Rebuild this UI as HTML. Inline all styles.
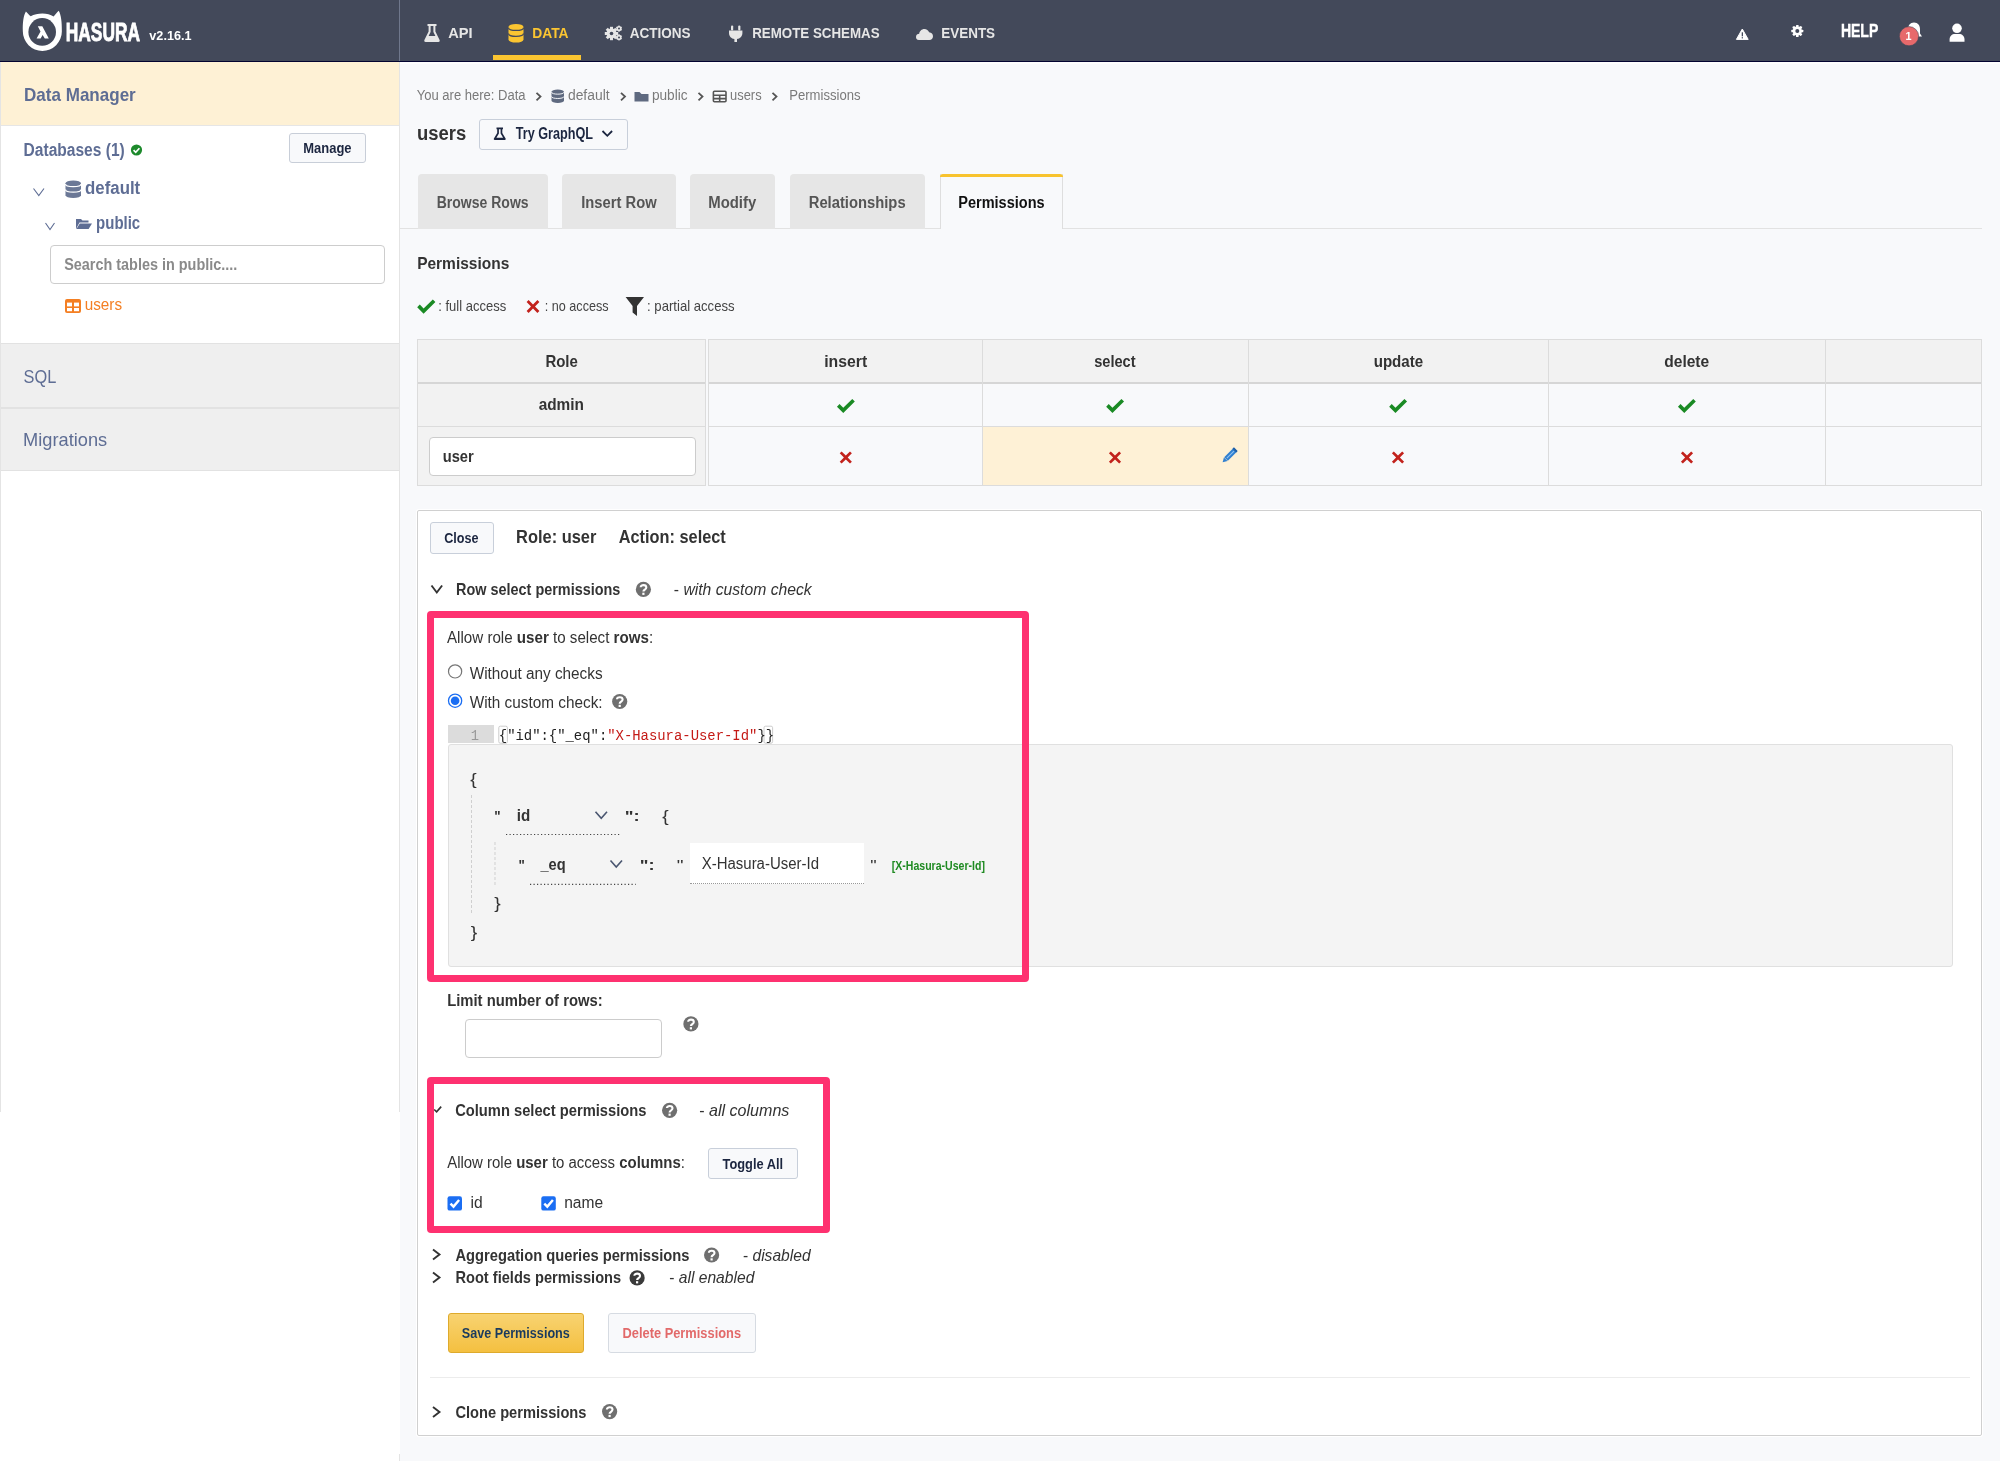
<!DOCTYPE html><html><head><meta charset="utf-8"><title>Hasura Console</title>
<style>html,body{margin:0;padding:0;width:2000px;height:1461px;overflow:hidden;font-family:"Liberation Sans",sans-serif}#root{position:relative;width:2000px;height:1461px;overflow:hidden}svg{position:absolute;left:0;top:0;will-change:transform}</style></head><body><div id="root">
<div style="position:absolute;left:0px;top:0px;width:2000px;height:1461px;background:#f8f9fb"></div>
<div style="position:absolute;left:0px;top:0px;width:2000px;height:61px;background:#43495a"></div>
<div style="position:absolute;left:0px;top:60.8px;width:2000px;height:1.2px;background:#030330"></div>
<div style="position:absolute;left:0px;top:62px;width:2000px;height:1.5px;background:#fdfdfd"></div>
<div style="position:absolute;left:0px;top:62px;width:400px;height:1050px;background:#fff"></div>
<div style="position:absolute;left:0px;top:1112px;width:400px;height:349px;background:#fff"></div>
<div style="position:absolute;left:0px;top:62px;width:1px;height:1050px;background:#e4e4e4"></div>
<div style="position:absolute;left:399px;top:62px;width:1px;height:1050px;background:#e4e4e4"></div>
<div style="position:absolute;left:399px;top:1454px;width:1px;height:7px;background:#e4e4e4"></div>
<div style="position:absolute;left:1px;top:62px;width:398px;height:63px;background:#fef1d5"></div>
<div style="position:absolute;left:1px;top:125px;width:398px;height:1px;background:#e6e6e6"></div>
<div style="position:absolute;left:1px;top:343px;width:398px;height:127px;background:#efefef"></div>
<div style="position:absolute;left:1px;top:343px;width:398px;height:1px;background:#e2e2e2"></div>
<div style="position:absolute;left:1px;top:407px;width:398px;height:1.5px;background:#e2e2e2"></div>
<div style="position:absolute;left:1px;top:470px;width:398px;height:1px;background:#e2e2e2"></div>
<div style="position:absolute;left:398.5px;top:0px;width:1.5px;height:61px;background:#6f778c"></div>
<div style="position:absolute;left:493px;top:55px;width:88px;height:5px;background:#fbc531"></div>
<div style="position:absolute;left:289px;top:132.5px;width:76.5px;height:30.5px;background:#f8f9fb;border:1px solid #c8ced8;border-radius:3px;box-sizing:border-box"></div>
<div style="position:absolute;left:50px;top:244.5px;width:334.5px;height:39px;background:#fff;border:1px solid #cdcdcd;border-radius:4px;box-sizing:border-box"></div>
<div style="position:absolute;left:478.5px;top:118.5px;width:149px;height:31.5px;background:#f8f9fb;border:1px solid #c8cfda;border-radius:3px;box-sizing:border-box"></div>
<div style="position:absolute;left:400px;top:228px;width:1582px;height:1px;background:#e2e2e2"></div>
<div style="position:absolute;left:417.5px;top:173.5px;width:130.20000000000005px;height:55px;background:#e6e6e6;border-radius:4px 4px 0 0"></div>
<div style="position:absolute;left:562px;top:173.5px;width:113.5px;height:55px;background:#e6e6e6;border-radius:4px 4px 0 0"></div>
<div style="position:absolute;left:689.8px;top:173.5px;width:85.40000000000009px;height:55px;background:#e6e6e6;border-radius:4px 4px 0 0"></div>
<div style="position:absolute;left:789.6px;top:173.5px;width:135.39999999999998px;height:55px;background:#e6e6e6;border-radius:4px 4px 0 0"></div>
<div style="position:absolute;left:939.7px;top:173.5px;width:123.59999999999991px;height:55px;background:#f8f9fb;border-left:1px solid #dedede;border-right:1px solid #dedede;box-sizing:border-box"></div>
<div style="position:absolute;left:939.7px;top:173.5px;width:123.59999999999991px;height:3.5px;background:#f8c32e;border-radius:3px 3px 0 0"></div>
<div style="position:absolute;left:417px;top:339px;width:289px;height:147px;background:#f2f2f2"></div>
<div style="position:absolute;left:708px;top:339px;width:1274px;height:44px;background:#f2f2f2"></div>
<div style="position:absolute;left:983px;top:427px;width:265px;height:58px;background:#fef1d6"></div>
<div style="position:absolute;left:417px;top:339px;width:289px;height:1px;background:#dcdcdc"></div>
<div style="position:absolute;left:708px;top:339px;width:1274px;height:1px;background:#dcdcdc"></div>
<div style="position:absolute;left:417px;top:426px;width:289px;height:1px;background:#dcdcdc"></div>
<div style="position:absolute;left:708px;top:426px;width:1274px;height:1px;background:#dcdcdc"></div>
<div style="position:absolute;left:417px;top:485px;width:289px;height:1px;background:#dcdcdc"></div>
<div style="position:absolute;left:708px;top:485px;width:1274px;height:1px;background:#dcdcdc"></div>
<div style="position:absolute;left:417px;top:382px;width:289px;height:1.6px;background:#d6d6d6"></div>
<div style="position:absolute;left:708px;top:382px;width:1274px;height:1.6px;background:#d6d6d6"></div>
<div style="position:absolute;left:417px;top:339px;width:1px;height:147px;background:#dcdcdc"></div>
<div style="position:absolute;left:705px;top:339px;width:1px;height:147px;background:#dcdcdc"></div>
<div style="position:absolute;left:708px;top:339px;width:1px;height:147px;background:#dcdcdc"></div>
<div style="position:absolute;left:982px;top:339px;width:1px;height:147px;background:#dcdcdc"></div>
<div style="position:absolute;left:1248px;top:339px;width:1px;height:147px;background:#dcdcdc"></div>
<div style="position:absolute;left:1548px;top:339px;width:1px;height:147px;background:#dcdcdc"></div>
<div style="position:absolute;left:1825px;top:339px;width:1px;height:147px;background:#dcdcdc"></div>
<div style="position:absolute;left:1981px;top:339px;width:1px;height:147px;background:#dcdcdc"></div>
<div style="position:absolute;left:428.5px;top:437px;width:267px;height:38.5px;background:#fff;border:1px solid #cccccc;border-radius:4px;box-sizing:border-box"></div>
<div style="position:absolute;left:417px;top:509.5px;width:1565px;height:926px;background:#fff;border:1px solid #d0d0d0;border-radius:2px;box-sizing:border-box;box-shadow:0 0 0 1px #fff"></div>
<div style="position:absolute;left:430px;top:522px;width:63.5px;height:31.5px;background:#f8f9fb;border:1px solid #c8cfda;border-radius:3px;box-sizing:border-box"></div>
<div style="position:absolute;left:427.3px;top:611.3px;width:602.2px;height:371.2px;border:7px solid #fe3170;border-radius:4px;box-sizing:border-box;z-index:5"></div>
<div style="position:absolute;left:447.8px;top:725px;width:46.4px;height:18px;background:#dcdcdc"></div>
<div style="position:absolute;left:447.7px;top:744px;width:1505px;height:222.5px;background:#f4f4f4;border:1px solid #e0e0e0;border-radius:3px;box-sizing:border-box"></div>
<div style="position:absolute;left:690px;top:843px;width:174px;height:41px;background:#fff;border-bottom:1px dotted #999;box-sizing:border-box"></div>
<div style="position:absolute;left:465px;top:1019.3px;width:197px;height:38.3px;background:#fff;border:1px solid #cccccc;border-radius:4px;box-sizing:border-box"></div>
<div style="position:absolute;left:427.3px;top:1077.4px;width:403.2px;height:155.8px;border:7px solid #fe3170;border-radius:4px;box-sizing:border-box;z-index:5"></div>
<div style="position:absolute;left:708.3px;top:1147.5px;width:90px;height:31.8px;background:#f8f9fb;border:1px solid #c8cfda;border-radius:3px;box-sizing:border-box"></div>
<div style="position:absolute;left:447.5px;top:1313.3px;width:136.8px;height:39.3px;background:linear-gradient(#f8d371,#f4c040);border:1px solid #deaa2c;border-radius:3px;box-sizing:border-box"></div>
<div style="position:absolute;left:608px;top:1313.3px;width:147.5px;height:39.3px;background:#f8f9fb;border:1px solid #d6dbe2;border-radius:3px;box-sizing:border-box"></div>
<div style="position:absolute;left:430px;top:1377px;width:1540px;height:1.2px;background:#ececec"></div>
<svg width="2000" height="1461" viewBox="0 0 2000 1461">
<path d="M22.85,31.4 C22.5,23 23.5,15.5 25.9,11.5 C27.6,13 29,15 30.7,16.3 C34,14.3 38,13.4 42.4,13.4 C46.8,13.4 50.5,14.4 53.6,16.4 C55.3,14.8 57,12.5 58.7,10.8 C61,14.5 62,22 61.85,31.4 A19.5,19.5 0 1 1 22.85,31.4 Z" fill="#fff"/>
<circle cx="42.2" cy="31.9" r="13.8" fill="#43495a"/>
<path d="M37.8,26.2 L42.3,26.2 L48.8,38.5 L44.8,38.5 L42.6,35 L40.6,38.5 L36.6,38.5 L40.5,31.4 Z" fill="#fff"/>
<text x="65.69" y="41" font-family='"Liberation Sans", sans-serif' font-size="26.16" font-weight="bold" font-style="normal" fill="#fff" textLength="74.35" lengthAdjust="spacingAndGlyphs" stroke="#fff" stroke-width="0.9">HASURA</text>
<text x="149.32" y="39.5" font-family='"Liberation Sans", sans-serif' font-size="13.50" font-weight="bold" font-style="normal" fill="#fff" textLength="42.22" lengthAdjust="spacingAndGlyphs">v2.16.1</text>
<path d="M427.5,24 L436.5,24 L436.5,26 L435.4,26 L435.4,31.5 L439.6,40 C440,41 439.5,42 438.4,42 L425.6,42 C424.5,42 424,41 424.4,40 L428.6,31.5 L428.6,26 L427.5,26 Z M430.6,26 L430.6,32 L428.6,36 L435.4,36 L433.4,32 L433.4,26 Z" fill="#e6e6e6" fill-rule="evenodd"/>
<text x="448.24" y="38" font-family='"Liberation Sans", sans-serif' font-size="15.26" font-weight="bold" font-style="normal" fill="#e6e6e6" textLength="24.37" lengthAdjust="spacingAndGlyphs">API</text>
<rect x="508.5" y="24" width="15" height="18.5" rx="7.5" ry="2.96" fill="#fbc531"/>
<path d="M508.5,27.625999999999998 C508.5,31.326 523.5,31.326 523.5,27.625999999999998" stroke="#43495a" stroke-width="1.30" fill="none"/>
<path d="M508.5,33.546 C508.5,37.246 523.5,37.246 523.5,33.546" stroke="#43495a" stroke-width="1.30" fill="none"/>
<text x="532.24" y="38" font-family='"Liberation Sans", sans-serif' font-size="15.26" font-weight="bold" font-style="normal" fill="#fbc531" textLength="36.37" lengthAdjust="spacingAndGlyphs">DATA</text>
<g fill="#e6e6e6"><circle cx="611.5" cy="33.5" r="5"/><rect x="610" y="26.8" width="3" height="13.4" transform="rotate(0 611.5 33.5)"/><rect x="610" y="26.8" width="3" height="13.4" transform="rotate(45 611.5 33.5)"/><rect x="610" y="26.8" width="3" height="13.4" transform="rotate(90 611.5 33.5)"/><rect x="610" y="26.8" width="3" height="13.4" transform="rotate(135 611.5 33.5)"/><circle cx="619" cy="28.6" r="2.6"/><rect x="618.2" y="25.6" width="1.6" height="6" transform="rotate(0 619 28.6)"/><rect x="618.2" y="25.6" width="1.6" height="6" transform="rotate(60 619 28.6)"/><rect x="618.2" y="25.6" width="1.6" height="6" transform="rotate(120 619 28.6)"/><circle cx="619" cy="37.4" r="2.6"/><rect x="618.2" y="34.4" width="1.6" height="6" transform="rotate(0 619 37.4)"/><rect x="618.2" y="34.4" width="1.6" height="6" transform="rotate(60 619 37.4)"/><rect x="618.2" y="34.4" width="1.6" height="6" transform="rotate(120 619 37.4)"/></g><circle cx="611.5" cy="33.5" r="1.8" fill="#43495a"/><circle cx="619" cy="28.6" r="1" fill="#43495a"/><circle cx="619" cy="37.4" r="1" fill="#43495a"/>
<text x="629.74" y="38" font-family='"Liberation Sans", sans-serif' font-size="15.26" font-weight="bold" font-style="normal" fill="#e6e6e6" textLength="60.87" lengthAdjust="spacingAndGlyphs">ACTIONS</text>
<g fill="#e6e6e6"><rect x="731" y="25.4" width="2.2" height="5" rx="1"/><rect x="738.2" y="25.4" width="2.2" height="5" rx="1"/><path d="M729,30.4 L742.4,30.4 L742.4,33 C742.4,36.5 740,38.6 737,39 L737,42 L734.4,42 L734.4,39 C731.4,38.6 729,36.5 729,33 Z"/></g>
<text x="752.24" y="38" font-family='"Liberation Sans", sans-serif' font-size="15.26" font-weight="bold" font-style="normal" fill="#e6e6e6" textLength="127.37" lengthAdjust="spacingAndGlyphs">REMOTE SCHEMAS</text>
<path d="M919,40 C916.6,40 916,38.5 916,37 C916,35 917.6,33.8 919.2,33.8 C919.4,31.2 921.6,29 924.4,29 C926.6,29 928.4,30.4 929.1,32.3 C931.6,32.5 933,34.3 933,36.3 C933,38.5 931.5,40 929.4,40 Z" fill="#e6e6e6"/>
<text x="941.24" y="38" font-family='"Liberation Sans", sans-serif' font-size="15.26" font-weight="bold" font-style="normal" fill="#e6e6e6" textLength="53.87" lengthAdjust="spacingAndGlyphs">EVENTS</text>
<path d="M1742.3,29 L1748.2,39.4 L1736.4,39.4 Z" fill="#fff" stroke="#fff" stroke-width="1" stroke-linejoin="round"/><rect x="1741.7" y="32.3" width="1.3" height="4" fill="#43495a"/><rect x="1741.7" y="37.2" width="1.3" height="1.2" fill="#43495a"/>
<g fill="#fff"><circle cx="1797.3" cy="31" r="4.6"/><rect x="1796" y="25" width="2.6" height="12" rx="0.6" transform="rotate(0 1797.3 31)"/><rect x="1796" y="25" width="2.6" height="12" rx="0.6" transform="rotate(45 1797.3 31)"/><rect x="1796" y="25" width="2.6" height="12" rx="0.6" transform="rotate(90 1797.3 31)"/><rect x="1796" y="25" width="2.6" height="12" rx="0.6" transform="rotate(135 1797.3 31)"/></g><circle cx="1797.3" cy="31" r="2" fill="#43495a"/>
<text x="1840.89" y="37" font-family='"Liberation Sans", sans-serif' font-size="18.17" font-weight="bold" font-style="normal" fill="#fff" textLength="37.44" lengthAdjust="spacingAndGlyphs" stroke="#fff" stroke-width="0.4">HELP</text>
<path d="M1914,22.5 C1918,22.5 1920,25.5 1920,29.5 L1920,33.5 L1922,36.5 L1906,36.5 L1908,33.5 L1908,29.5 C1908,25.5 1910,22.5 1914,22.5 Z" fill="#fff"/>
<circle cx="1909" cy="36.2" r="9.6" fill="#e7696b" stroke="#43495a" stroke-width="0.6"/>
<text x="1905.62" y="40" font-family='"Liberation Sans", sans-serif' font-size="11.50" font-weight="bold" font-style="normal" fill="#fff" textLength="6.04" lengthAdjust="spacingAndGlyphs">1</text>
<g fill="#fff"><circle cx="1957" cy="28.3" r="4.8"/><path d="M1949.6,41.7 L1949.6,39.5 C1949.6,36 1952,34 1955,34 L1959,34 C1962,34 1964.5,36 1964.5,39.5 L1964.5,41.7 Z"/></g>
<text x="24.07" y="100.5" font-family='"Liberation Sans", sans-serif' font-size="18.50" font-weight="bold" font-style="normal" fill="#5e6d94" textLength="111.67" lengthAdjust="spacingAndGlyphs">Data Manager</text>
<text x="23.60" y="156" font-family='"Liberation Sans", sans-serif' font-size="18.00" font-weight="bold" font-style="normal" fill="#5e6d94" textLength="101.12" lengthAdjust="spacingAndGlyphs">Databases (1)</text>
<circle cx="136.5" cy="150" r="5.6" fill="#1d8a2c"/><path d="M133.6,150.2 L135.7,152.3 L139.4,148.2" stroke="#fff" stroke-width="1.7" fill="none"/>
<text x="303.25" y="153" font-family='"Liberation Sans", sans-serif' font-size="15.00" font-weight="bold" font-style="normal" fill="#1c2640" textLength="48.35" lengthAdjust="spacingAndGlyphs">Manage</text>
<path d="M33.5,188.5 L38.8,195.5 L44,188.5" stroke="#5e6d94" stroke-width="1.1" fill="none"/>
<rect x="65.5" y="180.5" width="15.5" height="17.5" rx="7.75" ry="2.8000000000000003" fill="#6b7896"/>
<path d="M65.5,183.92999999999998 C65.5,187.42999999999998 81.0,187.42999999999998 81.0,183.92999999999998" stroke="#fff" stroke-width="1.23" fill="none"/>
<path d="M65.5,189.53 C65.5,193.03 81.0,193.03 81.0,189.53" stroke="#fff" stroke-width="1.23" fill="none"/>
<text x="85.12" y="194" font-family='"Liberation Sans", sans-serif' font-size="17.50" font-weight="bold" font-style="normal" fill="#5e6d94" textLength="55.08" lengthAdjust="spacingAndGlyphs">default</text>
<path d="M45.5,223 L50,229.5 L54.5,223" stroke="#5e6d94" stroke-width="1.1" fill="none"/>
<path d="M76,219 L81,219 L82.5,220.5 L88.5,220.5 L88.5,222.5 L79.5,222.5 L76,229 Z M79.8,223.6 L92,223.6 L88.6,229 L76.4,229 Z" fill="#5e6d94"/>
<text x="96.12" y="229" font-family='"Liberation Sans", sans-serif' font-size="17.50" font-weight="bold" font-style="normal" fill="#5e6d94" textLength="44.08" lengthAdjust="spacingAndGlyphs">public</text>
<text x="64.19" y="270" font-family='"Liberation Sans", sans-serif' font-size="16.30" font-weight="bold" font-style="normal" fill="#8a8a8a" textLength="173.07" lengthAdjust="spacingAndGlyphs">Search tables in public....</text>
<g><rect x="65" y="299" width="16" height="14" rx="2" fill="#f47f23"/><rect x="67" y="302.6" width="5" height="3.8" fill="#fff"/><rect x="74" y="302.6" width="5" height="3.8" fill="#fff"/><rect x="67" y="308" width="5" height="3.2" fill="#fff"/><rect x="74" y="308" width="5" height="3.2" fill="#fff"/></g>
<text x="84.74" y="310" font-family='"Liberation Sans", sans-serif' font-size="17.20" font-weight="normal" font-style="normal" fill="#f47f23" textLength="37.35" lengthAdjust="spacingAndGlyphs">users</text>
<text x="23.55" y="383" font-family='"Liberation Sans", sans-serif' font-size="19.00" font-weight="normal" font-style="normal" fill="#5e6d94" textLength="32.71" lengthAdjust="spacingAndGlyphs">SQL</text>
<text x="23.05" y="446" font-family='"Liberation Sans", sans-serif' font-size="19.00" font-weight="normal" font-style="normal" fill="#5e6d94" textLength="84.11" lengthAdjust="spacingAndGlyphs">Migrations</text>
<text x="416.73" y="100.2" font-family='"Liberation Sans", sans-serif' font-size="15.50" font-weight="normal" font-style="normal" fill="#7a7a7a" textLength="108.89" lengthAdjust="spacingAndGlyphs">You are here: Data</text>
<path d="M536.5,92.8 L540.5,96.6 L536.5,100.4" stroke="#555" stroke-width="1.8" fill="none"/>
<rect x="551.5" y="89.5" width="12.5" height="13.5" rx="6.25" ry="2.16" fill="#5f6a80"/>
<path d="M551.5,92.146 C551.5,94.846 564.0,94.846 564.0,92.146" stroke="#f8f9fb" stroke-width="0.95" fill="none"/>
<path d="M551.5,96.466 C551.5,99.166 564.0,99.166 564.0,96.466" stroke="#f8f9fb" stroke-width="0.95" fill="none"/>
<text x="567.93" y="100.2" font-family='"Liberation Sans", sans-serif' font-size="15.50" font-weight="normal" font-style="normal" fill="#7a7a7a" textLength="41.70" lengthAdjust="spacingAndGlyphs">default</text>
<path d="M621,92.8 L625,96.6 L621,100.4" stroke="#555" stroke-width="1.8" fill="none"/>
<path d="M634.5,92 L634.5,101.5 L648.5,101.5 L648.5,94 L641.5,94 L639.5,92 Z" fill="#5f6a80"/>
<text x="651.93" y="100.2" font-family='"Liberation Sans", sans-serif' font-size="15.50" font-weight="normal" font-style="normal" fill="#7a7a7a" textLength="35.70" lengthAdjust="spacingAndGlyphs">public</text>
<path d="M698.5,92.8 L702.5,96.6 L698.5,100.4" stroke="#555" stroke-width="1.8" fill="none"/>
<g fill="none" stroke="#555" stroke-width="1.6"><rect x="713.4" y="91.2" width="12.6" height="10.6" rx="1"/><path d="M713.4,95.2 L726,95.2 M713.4,98.6 L726,98.6 M719.7,95.2 L719.7,101.8"/></g>
<text x="730.05" y="100.2" font-family='"Liberation Sans", sans-serif' font-size="15.00" font-weight="normal" font-style="normal" fill="#7a7a7a" textLength="31.55" lengthAdjust="spacingAndGlyphs">users</text>
<path d="M772.5,92.8 L776.5,96.6 L772.5,100.4" stroke="#555" stroke-width="1.8" fill="none"/>
<text x="789.23" y="100.2" font-family='"Liberation Sans", sans-serif' font-size="15.50" font-weight="normal" font-style="normal" fill="#7a7a7a" textLength="71.39" lengthAdjust="spacingAndGlyphs">Permissions</text>
<text x="417.02" y="140" font-family='"Liberation Sans", sans-serif' font-size="19.50" font-weight="bold" font-style="normal" fill="#333" textLength="49.26" lengthAdjust="spacingAndGlyphs">users</text>
<path d="M496.5,127.6 L503,127.6 L503,129.2 L502.3,129.2 L502.3,133 L505.6,138.6 C506,139.4 505.6,140 504.8,140 L494.7,140 C493.9,140 493.5,139.4 493.9,138.6 L497.2,133 L497.2,129.2 L496.5,129.2 Z M498.9,129.2 L498.9,133.5 L496.4,137.8 L503.1,137.8 L500.6,133.5 L500.6,129.2 Z" fill="#1c2640" fill-rule="evenodd"/>
<text x="515.72" y="139.3" font-family='"Liberation Sans", sans-serif' font-size="15.60" font-weight="bold" font-style="normal" fill="#1c2640" textLength="77.40" lengthAdjust="spacingAndGlyphs">Try GraphQL</text>
<path d="M602.5,131 L607.3,135.8 L612.1,131" stroke="#1c2640" stroke-width="1.8" fill="none"/>
<text x="436.72" y="208" font-family='"Liberation Sans", sans-serif' font-size="15.60" font-weight="bold" font-style="normal" fill="#555" textLength="91.90" lengthAdjust="spacingAndGlyphs">Browse Rows</text>
<text x="581.22" y="208" font-family='"Liberation Sans", sans-serif' font-size="15.60" font-weight="bold" font-style="normal" fill="#555" textLength="75.40" lengthAdjust="spacingAndGlyphs">Insert Row</text>
<text x="708.22" y="208" font-family='"Liberation Sans", sans-serif' font-size="15.60" font-weight="bold" font-style="normal" fill="#555" textLength="48.00" lengthAdjust="spacingAndGlyphs">Modify</text>
<text x="808.72" y="208" font-family='"Liberation Sans", sans-serif' font-size="15.60" font-weight="bold" font-style="normal" fill="#555" textLength="96.90" lengthAdjust="spacingAndGlyphs">Relationships</text>
<text x="958.22" y="208" font-family='"Liberation Sans", sans-serif' font-size="15.60" font-weight="bold" font-style="normal" fill="#111" textLength="86.40" lengthAdjust="spacingAndGlyphs">Permissions</text>
<text x="417.15" y="269.4" font-family='"Liberation Sans", sans-serif' font-size="17.00" font-weight="bold" font-style="normal" fill="#333" textLength="92.13" lengthAdjust="spacingAndGlyphs">Permissions</text>
<path transform="translate(426.2 306.8) scale(1.0)" d="M-9,0.5 L-6.4,-2.2 L-2.6,1.6 L6.6,-7.4 L9.2,-4.7 L-2.6,7 Z" fill="#1a8a24"/>
<text x="438.29" y="310.5" font-family='"Liberation Sans", sans-serif' font-size="14.20" font-weight="normal" font-style="normal" fill="#444" textLength="67.88" lengthAdjust="spacingAndGlyphs">: full access</text>
<path transform="translate(533 306.5) scale(1.0)" d="M-6.4,-4.4 L-4.4,-6.4 L0,-2 L4.4,-6.4 L6.4,-4.4 L2,0 L6.4,4.4 L4.4,6.4 L0,2 L-4.4,6.4 L-6.4,4.4 L-2,0 Z" fill="#c2221c"/>
<text x="544.79" y="310.5" font-family='"Liberation Sans", sans-serif' font-size="14.20" font-weight="normal" font-style="normal" fill="#444" textLength="63.78" lengthAdjust="spacingAndGlyphs">: no access</text>
<path d="M625.6,297 L644,297 L637,306 L637,316 L632.6,312.6 L632.6,306 Z" fill="#333"/>
<text x="647.09" y="310.5" font-family='"Liberation Sans", sans-serif' font-size="14.20" font-weight="normal" font-style="normal" fill="#444" textLength="87.48" lengthAdjust="spacingAndGlyphs">: partial access</text>
<text x="545.38" y="367" font-family='"Liberation Sans", sans-serif' font-size="16.50" font-weight="bold" font-style="normal" fill="#333" textLength="32.48" lengthAdjust="spacingAndGlyphs">Role</text>
<text x="824.22" y="367" font-family='"Liberation Sans", sans-serif' font-size="16.50" font-weight="bold" font-style="normal" fill="#333" textLength="42.98" lengthAdjust="spacingAndGlyphs">insert</text>
<text x="1094.17" y="367" font-family='"Liberation Sans", sans-serif' font-size="16.50" font-weight="bold" font-style="normal" fill="#333" textLength="41.48" lengthAdjust="spacingAndGlyphs">select</text>
<text x="1373.67" y="367" font-family='"Liberation Sans", sans-serif' font-size="16.50" font-weight="bold" font-style="normal" fill="#333" textLength="49.48" lengthAdjust="spacingAndGlyphs">update</text>
<text x="1664.22" y="367" font-family='"Liberation Sans", sans-serif' font-size="16.50" font-weight="bold" font-style="normal" fill="#333" textLength="44.98" lengthAdjust="spacingAndGlyphs">delete</text>
<text x="538.67" y="410" font-family='"Liberation Sans", sans-serif' font-size="16.50" font-weight="bold" font-style="normal" fill="#333" textLength="45.28" lengthAdjust="spacingAndGlyphs">admin</text>
<path transform="translate(845.8 406.2) scale(0.98)" d="M-9,0.5 L-6.4,-2.2 L-2.6,1.6 L6.6,-7.4 L9.2,-4.7 L-2.6,7 Z" fill="#1a8a24"/>
<path transform="translate(1115 406.2) scale(0.98)" d="M-9,0.5 L-6.4,-2.2 L-2.6,1.6 L6.6,-7.4 L9.2,-4.7 L-2.6,7 Z" fill="#1a8a24"/>
<path transform="translate(1398 406.2) scale(0.98)" d="M-9,0.5 L-6.4,-2.2 L-2.6,1.6 L6.6,-7.4 L9.2,-4.7 L-2.6,7 Z" fill="#1a8a24"/>
<path transform="translate(1686.8 406.2) scale(0.98)" d="M-9,0.5 L-6.4,-2.2 L-2.6,1.6 L6.6,-7.4 L9.2,-4.7 L-2.6,7 Z" fill="#1a8a24"/>
<text x="442.68" y="462" font-family='"Liberation Sans", sans-serif' font-size="16.50" font-weight="bold" font-style="normal" fill="#333" textLength="30.98" lengthAdjust="spacingAndGlyphs">user</text>
<path transform="translate(845.8 457.5) scale(0.95)" d="M-6.4,-4.4 L-4.4,-6.4 L0,-2 L4.4,-6.4 L6.4,-4.4 L2,0 L6.4,4.4 L4.4,6.4 L0,2 L-4.4,6.4 L-6.4,4.4 L-2,0 Z" fill="#c2221c"/>
<path transform="translate(1115 457.5) scale(0.95)" d="M-6.4,-4.4 L-4.4,-6.4 L0,-2 L4.4,-6.4 L6.4,-4.4 L2,0 L6.4,4.4 L4.4,6.4 L0,2 L-4.4,6.4 L-6.4,4.4 L-2,0 Z" fill="#c2221c"/>
<path transform="translate(1398 457.5) scale(0.95)" d="M-6.4,-4.4 L-4.4,-6.4 L0,-2 L4.4,-6.4 L6.4,-4.4 L2,0 L6.4,4.4 L4.4,6.4 L0,2 L-4.4,6.4 L-6.4,4.4 L-2,0 Z" fill="#c2221c"/>
<path transform="translate(1687 457.5) scale(0.95)" d="M-6.4,-4.4 L-4.4,-6.4 L0,-2 L4.4,-6.4 L6.4,-4.4 L2,0 L6.4,4.4 L4.4,6.4 L0,2 L-4.4,6.4 L-6.4,4.4 L-2,0 Z" fill="#c2221c"/>
<g transform="translate(1229 456) rotate(45)"><rect x="-2.6" y="-9.2" width="5.2" height="13.4" fill="#2f7fd0"/><path d="M-2.6,4.6 L2.6,4.6 L0,9 Z" fill="#2f7fd0"/><rect x="-2.6" y="-9.6" width="5.2" height="2" fill="#1f5fa8"/><rect x="-0.6" y="-7" width="1.2" height="10" fill="#8cc0f0"/></g>
<text x="444.25" y="543.2" font-family='"Liberation Sans", sans-serif' font-size="15.00" font-weight="bold" font-style="normal" fill="#1c2640" textLength="34.35" lengthAdjust="spacingAndGlyphs">Close</text>
<text x="516.05" y="543.2" font-family='"Liberation Sans", sans-serif' font-size="19.00" font-weight="bold" font-style="normal" fill="#333" textLength="80.31" lengthAdjust="spacingAndGlyphs">Role: user</text>
<text x="618.75" y="543.2" font-family='"Liberation Sans", sans-serif' font-size="19.00" font-weight="bold" font-style="normal" fill="#333" textLength="107.01" lengthAdjust="spacingAndGlyphs">Action: select</text>
<path d="M431.5,585.5 L436.8,592.5 L442.1,585.5" stroke="#333" stroke-width="1.9" fill="none"/>
<text x="456.07" y="594.9" font-family='"Liberation Sans", sans-serif' font-size="16.50" font-weight="bold" font-style="normal" fill="#333" textLength="164.29" lengthAdjust="spacingAndGlyphs">Row select permissions</text>
<circle cx="643.4" cy="589.4" r="7.6" fill="#6f6f6f"/><path d="M640.6999999999999,587.1999999999999 C640.6999999999999,584.4 646.3,584.4 646.3,587.4 C646.3,589.6 643.4,589.6 643.4,591.6" stroke="#fff" stroke-width="2.1" fill="none"/><rect x="642.3" y="592.6999999999999" width="2.2" height="2.2" fill="#fff"/>
<text x="673.77" y="594.9" font-family='"Liberation Sans", sans-serif' font-size="16.50" font-weight="normal" font-style="normal" fill="#333" textLength="137.89" lengthAdjust="spacingAndGlyphs">- <tspan font-style="italic">with custom check</tspan></text>
<text x="447.00" y="643" font-family='"Liberation Sans", sans-serif' font-size="16.00" font-weight="normal" font-style="normal" fill="#333" textLength="206.14" lengthAdjust="spacingAndGlyphs">Allow role <tspan font-weight="bold">user</tspan> to select <tspan font-weight="bold">rows</tspan>:</text>
<circle cx="455.1" cy="671.4" r="6.6" fill="#fff" stroke="#767676" stroke-width="1.2"/>
<text x="469.70" y="678.7" font-family='"Liberation Sans", sans-serif' font-size="16.00" font-weight="normal" font-style="normal" fill="#333" textLength="132.94" lengthAdjust="spacingAndGlyphs">Without any checks</text>
<circle cx="455.1" cy="700.7" r="6.6" fill="#fff" stroke="#1b6ef3" stroke-width="1.3"/><circle cx="455.1" cy="700.7" r="4.3" fill="#1b6ef3"/>
<text x="469.70" y="708" font-family='"Liberation Sans", sans-serif' font-size="16.00" font-weight="normal" font-style="normal" fill="#333" textLength="132.94" lengthAdjust="spacingAndGlyphs">With custom check:</text>
<circle cx="619.7" cy="701.5" r="7.6" fill="#6f6f6f"/><path d="M617.0,699.3 C617.0,696.5 622.6,696.5 622.6,699.5 C622.6,701.7 619.7,701.7 619.7,703.7" stroke="#fff" stroke-width="2.1" fill="none"/><rect x="618.6" y="704.8" width="2.2" height="2.2" fill="#fff"/>
<text x="470.80" y="739.5" font-family='"Liberation Mono", monospace' font-size="14.00" font-weight="normal" font-style="normal" fill="#999" textLength="8.26" lengthAdjust="spacingAndGlyphs">1</text>
<rect x="498.8" y="726.2" width="8.6" height="17" rx="1.5" fill="none" stroke="#c6c6c6" stroke-width="0.9"/><rect x="764" y="726.2" width="8.6" height="17" rx="1.5" fill="none" stroke="#c6c6c6" stroke-width="0.9"/>
<text x="498.81" y="739.5" font-family='"Liberation Mono", monospace' font-size="13.90" font-weight="normal" font-style="normal" fill="#222" textLength="275.25" lengthAdjust="spacingAndGlyphs">{"id":{"_eq":<tspan fill="#c41a16">"X-Hasura-User-Id"</tspan>}}</text>
<text x="470.20" y="784.5" font-family='"Liberation Sans", sans-serif' font-size="16.00" font-weight="normal" font-style="normal" fill="#333" textLength="6.44" lengthAdjust="spacingAndGlyphs">{</text>
<path d="M471.5,795 L471.5,913" stroke="#cfcfcf" stroke-width="1" stroke-dasharray="3,2"/>
<text x="494.25" y="821" font-family='"Liberation Sans", sans-serif' font-size="15.00" font-weight="bold" font-style="normal" fill="#333" textLength="6.35" lengthAdjust="spacingAndGlyphs">"</text>
<text x="516.77" y="821" font-family='"Liberation Sans", sans-serif' font-size="16.50" font-weight="bold" font-style="normal" fill="#333" textLength="13.48" lengthAdjust="spacingAndGlyphs">id</text>
<path d="M595.5,811.8 L601.25,818.4 L607.0,811.8" stroke="#4a5670" stroke-width="1.6" fill="none"/>
<path d="M506,834.5 L620.5,834.5" stroke="#444" stroke-width="1.2" stroke-dasharray="1.2,2.3"/>
<text x="624.65" y="821" font-family='"Liberation Sans", sans-serif' font-size="15.00" font-weight="bold" font-style="normal" fill="#333" textLength="14.95" lengthAdjust="spacingAndGlyphs">":</text>
<text x="662.20" y="821.5" font-family='"Liberation Sans", sans-serif' font-size="16.00" font-weight="normal" font-style="normal" fill="#333" textLength="6.44" lengthAdjust="spacingAndGlyphs">{</text>
<path d="M495,842 L495,885.5" stroke="#cfcfcf" stroke-width="1" stroke-dasharray="3,2"/>
<text x="518.45" y="869.8" font-family='"Liberation Sans", sans-serif' font-size="15.00" font-weight="bold" font-style="normal" fill="#333" textLength="6.35" lengthAdjust="spacingAndGlyphs">"</text>
<text x="540.47" y="869.8" font-family='"Liberation Sans", sans-serif' font-size="16.50" font-weight="bold" font-style="normal" fill="#333" textLength="25.18" lengthAdjust="spacingAndGlyphs">_eq</text>
<path d="M610.5,860.5 L616.25,867.1 L622.0,860.5" stroke="#4a5670" stroke-width="1.6" fill="none"/>
<path d="M530,884.3 L635.7,884.3" stroke="#444" stroke-width="1.2" stroke-dasharray="1.2,2.3"/>
<text x="639.75" y="869.8" font-family='"Liberation Sans", sans-serif' font-size="15.00" font-weight="bold" font-style="normal" fill="#333" textLength="14.85" lengthAdjust="spacingAndGlyphs">":</text>
<text x="676.85" y="869.8" font-family='"Liberation Sans", sans-serif' font-size="15.00" font-weight="normal" font-style="normal" fill="#333" textLength="6.75" lengthAdjust="spacingAndGlyphs">"</text>
<text x="701.70" y="869" font-family='"Liberation Sans", sans-serif' font-size="16.00" font-weight="normal" font-style="normal" fill="#333" textLength="117.34" lengthAdjust="spacingAndGlyphs">X-Hasura-User-Id</text>
<text x="870.25" y="869.8" font-family='"Liberation Sans", sans-serif' font-size="15.00" font-weight="normal" font-style="normal" fill="#333" textLength="6.35" lengthAdjust="spacingAndGlyphs">"</text>
<text x="891.77" y="869.8" font-family='"Liberation Sans", sans-serif' font-size="12.50" font-weight="bold" font-style="normal" fill="#1f8a22" textLength="93.12" lengthAdjust="spacingAndGlyphs">[X-Hasura-User-Id]</text>
<text x="494.20" y="908.5" font-family='"Liberation Sans", sans-serif' font-size="16.00" font-weight="normal" font-style="normal" fill="#333" textLength="6.44" lengthAdjust="spacingAndGlyphs">}</text>
<text x="470.70" y="937.5" font-family='"Liberation Sans", sans-serif' font-size="16.00" font-weight="normal" font-style="normal" fill="#333" textLength="6.44" lengthAdjust="spacingAndGlyphs">}</text>
<text x="447.20" y="1006" font-family='"Liberation Sans", sans-serif' font-size="16.00" font-weight="bold" font-style="normal" fill="#333" textLength="155.44" lengthAdjust="spacingAndGlyphs">Limit number of rows:</text>
<circle cx="690.9" cy="1023.9" r="7.6" fill="#6f6f6f"/><path d="M688.1999999999999,1021.6999999999999 C688.1999999999999,1018.9 693.8,1018.9 693.8,1021.9 C693.8,1024.1 690.9,1024.1 690.9,1026.1" stroke="#fff" stroke-width="2.1" fill="none"/><rect x="689.8" y="1027.2" width="2.2" height="2.2" fill="#fff"/>
<path d="M434.2,1109.5 L436.6,1111.8 L441.2,1106.6" stroke="#333" stroke-width="1.6" fill="none"/>
<text x="455.18" y="1115.75" font-family='"Liberation Sans", sans-serif' font-size="16.50" font-weight="bold" font-style="normal" fill="#333" textLength="191.24" lengthAdjust="spacingAndGlyphs">Column select permissions</text>
<circle cx="669.6" cy="1110.3" r="7.6" fill="#6f6f6f"/><path d="M666.9,1108.1 C666.9,1105.3 672.5,1105.3 672.5,1108.3 C672.5,1110.5 669.6,1110.5 669.6,1112.5" stroke="#fff" stroke-width="2.1" fill="none"/><rect x="668.5" y="1113.6" width="2.2" height="2.2" fill="#fff"/>
<text x="699.17" y="1115.75" font-family='"Liberation Sans", sans-serif' font-size="16.50" font-weight="normal" font-style="normal" fill="#333" textLength="90.23" lengthAdjust="spacingAndGlyphs">- <tspan font-style="italic">all columns</tspan></text>
<text x="447.20" y="1168" font-family='"Liberation Sans", sans-serif' font-size="16.00" font-weight="normal" font-style="normal" fill="#333" textLength="237.69" lengthAdjust="spacingAndGlyphs">Allow role <tspan font-weight="bold">user</tspan> to access <tspan font-weight="bold">columns</tspan>:</text>
<text x="722.55" y="1168.5" font-family='"Liberation Sans", sans-serif' font-size="15.00" font-weight="bold" font-style="normal" fill="#1c2640" textLength="60.60" lengthAdjust="spacingAndGlyphs">Toggle All</text>
<rect x="447.5" y="1196.3" width="14.5" height="14.3" rx="2.2" fill="#1b6ef3"/><path d="M450.5,1203.6 L453.5,1206.6 L459.1,1199.8999999999999" stroke="#fff" stroke-width="2.4" fill="none"/>
<text x="470.50" y="1208" font-family='"Liberation Sans", sans-serif' font-size="16.00" font-weight="normal" font-style="normal" fill="#333" textLength="12.14" lengthAdjust="spacingAndGlyphs">id</text>
<rect x="541.3" y="1196.3" width="14.5" height="14.3" rx="2.2" fill="#1b6ef3"/><path d="M544.3,1203.6 L547.3,1206.6 L552.9,1199.8999999999999" stroke="#fff" stroke-width="2.4" fill="none"/>
<text x="564.20" y="1208" font-family='"Liberation Sans", sans-serif' font-size="16.00" font-weight="normal" font-style="normal" fill="#333" textLength="38.94" lengthAdjust="spacingAndGlyphs">name</text>
<path d="M433,1249.5 L439.5,1254.5 L433,1259.5" stroke="#333" stroke-width="1.9" fill="none"/>
<text x="455.43" y="1260.5" font-family='"Liberation Sans", sans-serif' font-size="16.50" font-weight="bold" font-style="normal" fill="#333" textLength="233.99" lengthAdjust="spacingAndGlyphs">Aggregation queries permissions</text>
<circle cx="711.6" cy="1255" r="7.6" fill="#6f6f6f"/><path d="M708.9,1252.8 C708.9,1250 714.5,1250 714.5,1253 C714.5,1255.2 711.6,1255.2 711.6,1257.2" stroke="#fff" stroke-width="2.1" fill="none"/><rect x="710.5" y="1258.3" width="2.2" height="2.2" fill="#fff"/>
<text x="742.92" y="1260.5" font-family='"Liberation Sans", sans-serif' font-size="16.50" font-weight="normal" font-style="normal" fill="#333" textLength="67.73" lengthAdjust="spacingAndGlyphs">- <tspan font-style="italic">disabled</tspan></text>
<path d="M433,1272.5 L439.5,1277.5 L433,1282.5" stroke="#333" stroke-width="1.9" fill="none"/>
<text x="455.43" y="1283.25" font-family='"Liberation Sans", sans-serif' font-size="16.50" font-weight="bold" font-style="normal" fill="#333" textLength="165.74" lengthAdjust="spacingAndGlyphs">Root fields permissions</text>
<circle cx="637.1" cy="1277.9" r="7.6" fill="#3a3a3a"/><path d="M634.4,1275.7 C634.4,1272.9 640.0,1272.9 640.0,1275.9 C640.0,1278.1000000000001 637.1,1278.1000000000001 637.1,1280.1000000000001" stroke="#fff" stroke-width="2.1" fill="none"/><rect x="636.0" y="1281.2" width="2.2" height="2.2" fill="#fff"/>
<text x="669.17" y="1283.25" font-family='"Liberation Sans", sans-serif' font-size="16.50" font-weight="normal" font-style="normal" fill="#333" textLength="85.23" lengthAdjust="spacingAndGlyphs">- <tspan font-style="italic">all enabled</tspan></text>
<text x="461.76" y="1338" font-family='"Liberation Sans", sans-serif' font-size="14.80" font-weight="bold" font-style="normal" fill="#1a3a5e" textLength="108.08" lengthAdjust="spacingAndGlyphs">Save Permissions</text>
<text x="622.51" y="1338" font-family='"Liberation Sans", sans-serif' font-size="14.80" font-weight="bold" font-style="normal" fill="#e26a6a" textLength="118.58" lengthAdjust="spacingAndGlyphs">Delete Permissions</text>
<path d="M433,1407 L439.5,1412.0 L433,1417" stroke="#333" stroke-width="1.9" fill="none"/>
<text x="455.43" y="1417.5" font-family='"Liberation Sans", sans-serif' font-size="16.50" font-weight="bold" font-style="normal" fill="#333" textLength="130.99" lengthAdjust="spacingAndGlyphs">Clone permissions</text>
<circle cx="609.6" cy="1411.6" r="7.6" fill="#6f6f6f"/><path d="M606.9,1409.3999999999999 C606.9,1406.6 612.5,1406.6 612.5,1409.6 C612.5,1411.8 609.6,1411.8 609.6,1413.8" stroke="#fff" stroke-width="2.1" fill="none"/><rect x="608.5" y="1414.8999999999999" width="2.2" height="2.2" fill="#fff"/>
</svg></div></body></html>
